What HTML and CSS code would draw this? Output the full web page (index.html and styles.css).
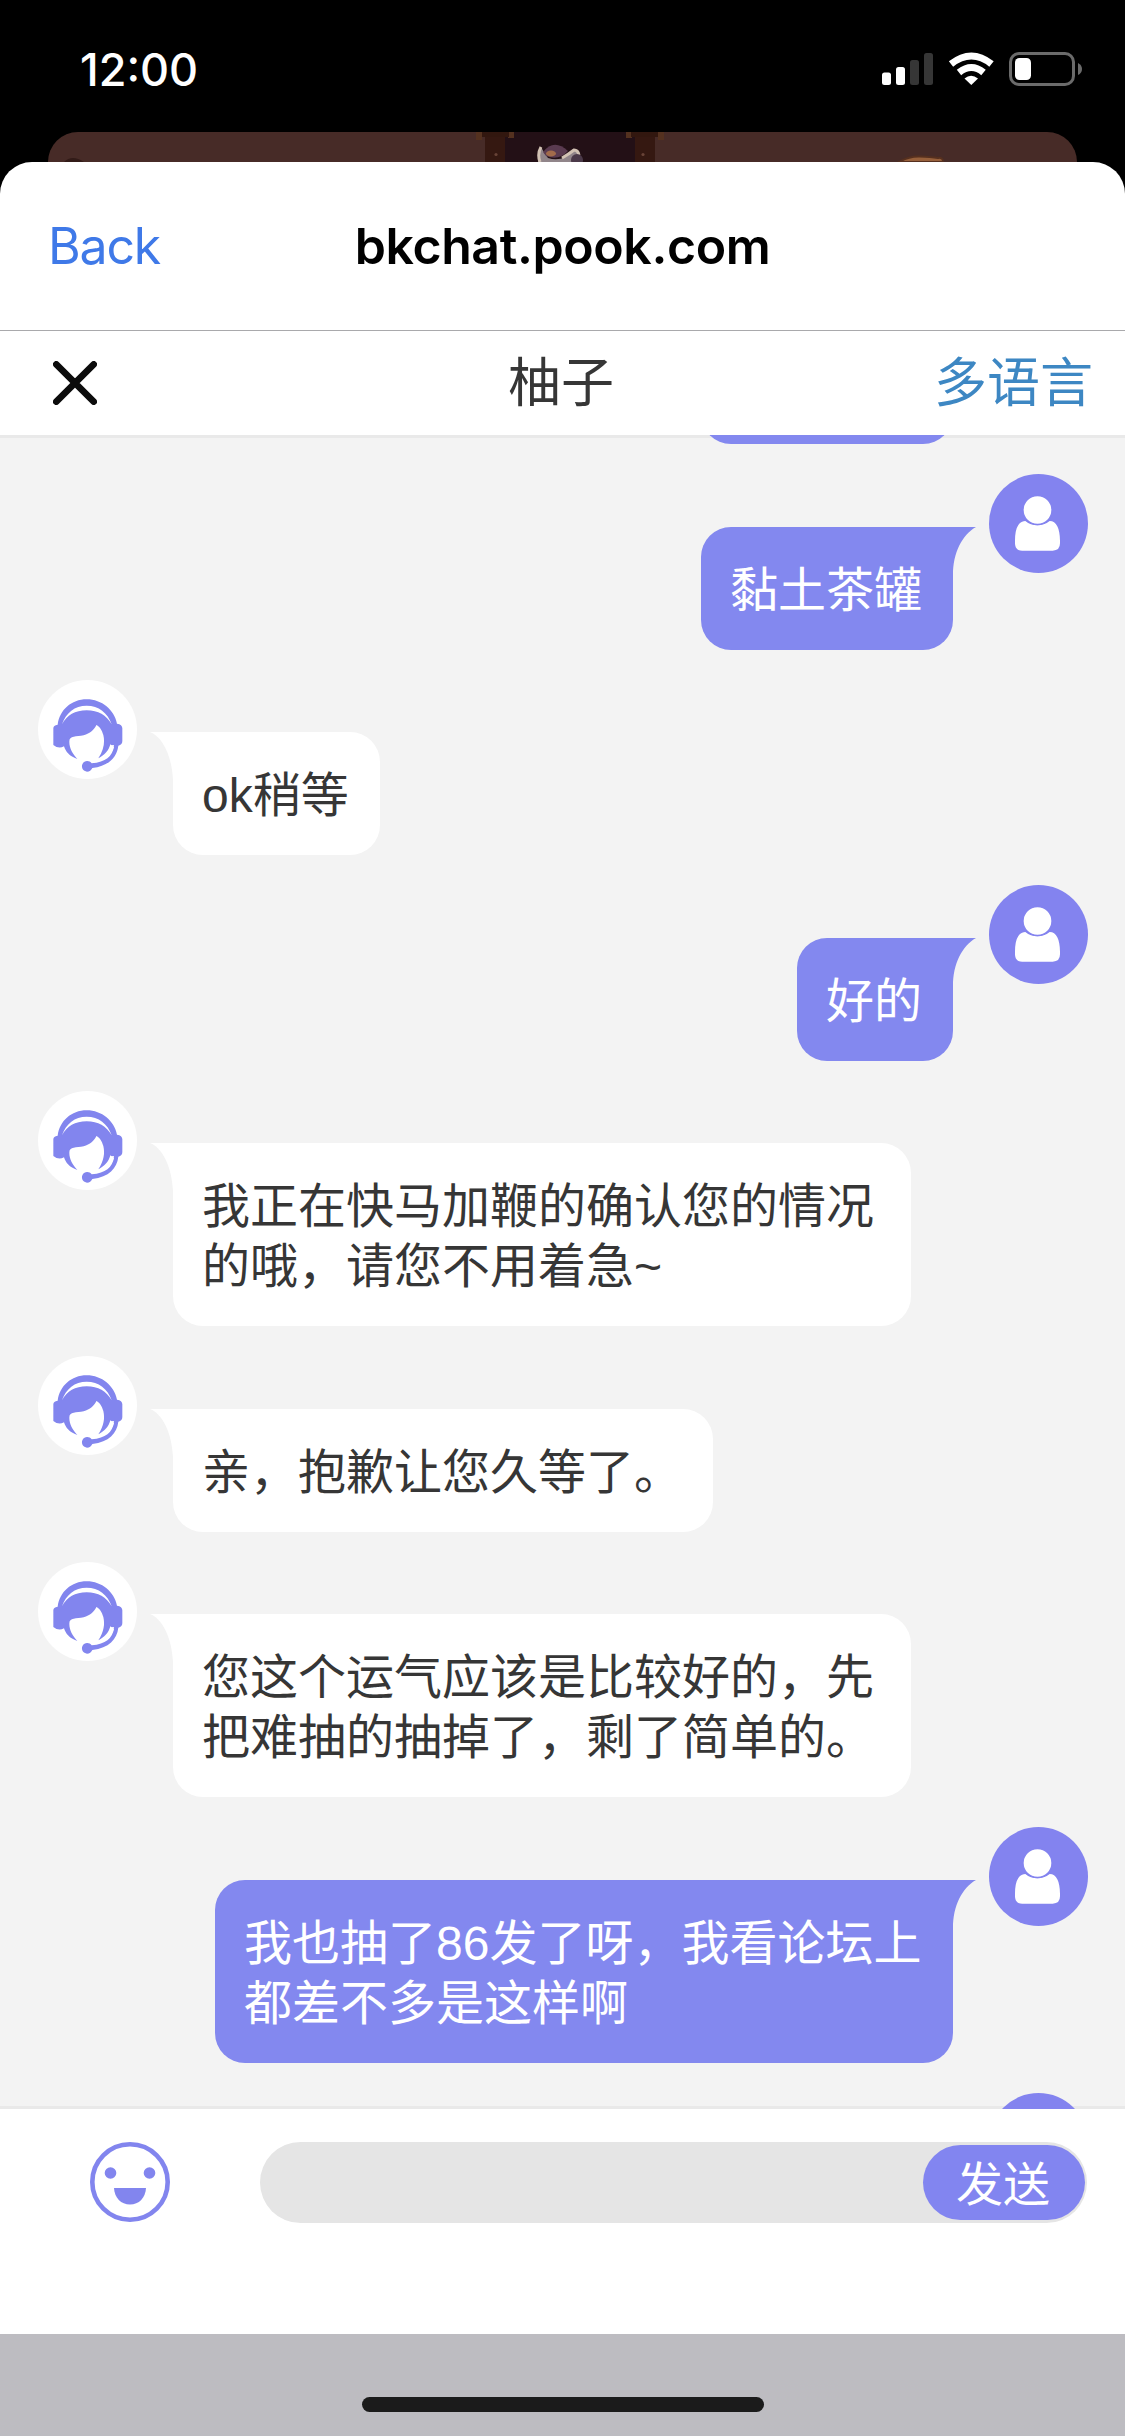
FILE: index.html
```html
<!DOCTYPE html>
<html lang="zh-CN">
<head>
<meta charset="utf-8">
<title>bkchat.pook.com</title>
<link rel="stylesheet" href="styles.css">
</head>
<body>
<svg class="defs" aria-hidden="true">
  <symbol id="user" viewBox="927 162 297 297">
    <circle cx="1075.500" cy="310.500" r="148.500" fill="#8383ef"/>
    <path d="M1036 303C1016 303 1005 325 1005 362V370Q1005 392 1027 392H1118Q1140 392 1140 370V362C1140 325 1129 303 1109 303Q1092 316 1072 316T1036 303Z" fill="#fff"/>
    <circle cx="1072.500" cy="270" r="43.500" fill="#fff" stroke="#8383ef" stroke-width="4"/>
  </symbol>
  <symbol id="agent" viewBox="113 59 297 297">
    <circle cx="261.500" cy="207.500" r="148.500" fill="#fff"/>
    <g fill="#8285ee">
      <path d="M172 193C178 149 213 117 259 117S342 149 350 190Q366 192 366 204V242Q366 253 354 256C350 290 326 317 276 323Q271 334 260 334A16 16 0 1 1 274 309C317 305 335 288 341 260L330 252C326 269 313 285 294 294C311 268 314 245 309 224C304 209 300 200 288 194C282 208 269 219 250 225C228 230 207 225 207 244C207 264 217 280 231 296C207 288 196 274 191 258Q175 267 159 254V204Q159 195 172 193Z"/>
    </g>
    <path d="M185 192C197 157 223 136 259 136S322 157 334 192C318 164 294 150 259 150S200 164 185 192Z" fill="#fff"/>
    <path d="M333 255Q330 278 318 287Q338 280 341 254Z" fill="#fff"/>
  </symbol>
  <symbol id="tail-right" viewBox="0 0 24 48"><path d="M0 0H24C10 8 1 26 1 48H0Z" fill="#8388ef"/></symbol>
  <symbol id="tail-left" viewBox="0 0 24 48"><path d="M24 0H0C13 5 22 25 23 48H24Z" fill="#fff"/></symbol>
</svg>

<div class="phone">
  <div class="status">
    <span class="clock">12:00</span>
    <svg class="indicators" width="202" height="34" viewBox="0 0 202 34">
      <g fill="#fff"><rect x="0" y="20.500" width="9" height="12.500" rx="2.500"/><rect x="14" y="15" width="9" height="18" rx="2.500"/></g>
      <g fill="#363636"><rect x="28" y="8" width="9" height="25" rx="2.500"/><rect x="42" y="1" width="9" height="32" rx="2.500"/></g>
      <g fill="none" stroke="#fff" stroke-width="7"><path d="M69 12Q89.500-4 109.500 12"/><path d="M77 20.500Q89.500 10.500 101.500 20.500"/></g>
      <path d="M82.500 26.500Q89 21 96 26.500L89.300 33Z" fill="#fff"/>
      <rect x="128.500" y="1.500" width="63" height="31" rx="8.500" fill="none" stroke="#6b6b6b" stroke-width="3"/>
      <path d="M196 11Q200 13 200 17T196 23Z" fill="#6b6b6b"/>
      <rect x="133" y="6" width="16" height="22" rx="4.500" fill="#fff"/>
    </svg>
  </div>

  <div class="behind">
    <svg width="1029" height="30" viewBox="48 132 1029 30">
      <rect x="48" y="132" width="1029" height="30" fill="#472b27"/>
      <rect x="505" y="132" width="130" height="30" fill="#231016"/>
      <path d="M485 132h20v30h-20zM635 132h20v30h-20z" fill="#351811"/>
      <path d="M476 132h38v6h-6v-3h-26v5h-6zM626 132h38v8h-6v-5h-26v3h-6z" fill="#54311f"/>
      <path d="M482 132h27v5h-27zM631 132h27v5h-27z" fill="#32170f"/>
      <circle cx="496" cy="154.500" r="1.600" fill="#684337"/><circle cx="643" cy="154.500" r="1.600" fill="#684337"/>
      <path d="M538 162Q538 152 541 147Q544 153 548 158Q563 163 575 149L580 155V162Z" fill="#91858a"/>
      <path d="M543 152Q554 138 568 151Q559 161 546 156Z" fill="#5a3b50"/>
      <ellipse cx="551" cy="153.500" rx="5" ry="3" fill="#a26b4b"/>
      <path d="M540 162Q537 154 541 147M562 158Q569 154 574 150Q578 150 579 155" fill="none" stroke="#d2c2b4" stroke-width="3"/>
      <circle cx="577" cy="160" r="6" fill="#4b3949"/>
      <path d="M64 162Q72 154 84 162Z" fill="#321b18"/>
      <path d="M899 162Q909 156 920 156.500T938 158Q943 157 943 162Z" fill="#97603b" stroke="#56301f" stroke-width="2"/>
    </svg>
  </div>

  <div class="sheet">
    <div class="browser-bar"><span class="back">Back</span><span class="host">bkchat.pook.com</span></div>
    <div class="chat-head">
      <svg class="close" width="44" height="44" viewBox="0 0 44 44"><path d="M3.300 3.300L40.700 40.700M40.700 3.300L3.300 40.700" stroke="#0c0c0c" stroke-width="6.600" stroke-linecap="round"/></svg>
      <span class="name">柚子</span>
      <span class="lang">多语言</span>
    </div>

    <div class="chat">
      <div class="row me first"><div class="bubble clipped"></div></div>
      <div class="row me"><div class="bubble">黏土茶罐<svg class="tail"><use href="#tail-right"/></svg></div><svg class="avatar"><use href="#user"/></svg></div>
      <div class="row"><svg class="avatar"><use href="#agent"/></svg><div class="bubble">ok稍等<svg class="tail"><use href="#tail-left"/></svg></div></div>
      <div class="row me"><div class="bubble">好的<svg class="tail"><use href="#tail-right"/></svg></div><svg class="avatar"><use href="#user"/></svg></div>
      <div class="row"><svg class="avatar"><use href="#agent"/></svg><div class="bubble">我正在快马加鞭的确认您的情况的哦，请您不用着急~<svg class="tail"><use href="#tail-left"/></svg></div></div>
      <div class="row"><svg class="avatar"><use href="#agent"/></svg><div class="bubble">亲，抱歉让您久等了。<svg class="tail"><use href="#tail-left"/></svg></div></div>
      <div class="row"><svg class="avatar"><use href="#agent"/></svg><div class="bubble">您这个运气应该是比较好的，先把难抽的抽掉了，剩了简单的。<svg class="tail"><use href="#tail-left"/></svg></div></div>
      <div class="row me"><div class="bubble">我也抽了86发了呀，我看论坛上都差不多是这样啊<svg class="tail"><use href="#tail-right"/></svg></div><svg class="avatar"><use href="#user"/></svg></div>
      <div class="row me"><svg class="avatar"><use href="#user"/></svg></div>
    </div>

    <div class="composer">
      <svg class="emoji" width="80" height="80" viewBox="0 0 80 80">
        <circle cx="40" cy="40" r="37.700" fill="none" stroke="#8285ee" stroke-width="4.600"/>
        <circle cx="20.500" cy="31" r="5.800" fill="#8285ee"/><circle cx="59.500" cy="31" r="5.800" fill="#8285ee"/>
        <path d="M24 46H56C55.500 56 49 62.500 40 62.500S24.500 56 24 46Z" fill="#8285ee"/>
      </svg>
      <div class="field"><span class="send">发送</span></div>
    </div>
    <div class="home"><div class="home-bar"></div></div>
  </div>
</div>
</body>
</html>
```
FILE: styles.css
```css
* { box-sizing: border-box; }
body {
  margin: 0;
  background: #000;
  font-family: "Liberation Sans", "Noto Sans CJK SC", sans-serif;
}
.defs { display: block; width: 0; height: 0; }
.phone {
  width: 1125px;
  height: 2436px;
  overflow: hidden;
  display: flex;
  flex-direction: column;
  background: #000;
}
.status {
  height: 132px;
  flex: none;
  display: flex;
  justify-content: space-between;
  align-items: flex-start;
  padding: 52px 41px 0 80px;
  color: #fff;
}
.clock {
  padding-top: 1px;
  font: 550 45px/34px Inter, sans-serif;
}
.behind {
  height: 30px;
  flex: none;
  margin: 0 48px;
  border-radius: 30px 30px 0 0;
  overflow: hidden;
}
.behind svg { display: block; }
.sheet {
  flex: 1;
  display: flex;
  flex-direction: column;
  min-height: 0;
  background: #fff;
  border-radius: 32px 32px 0 0;
  overflow: hidden;
}
.browser-bar {
  height: 169px;
  flex: none;
  display: grid;
  grid-template-columns: 1fr auto 1fr;
  align-items: center;
  padding: 0 48px;
  border-bottom: 1px solid #a9a9ac;
  font-family: Inter, sans-serif;
  font-size: 50px;
  line-height: 60px;
  color: #000;
}
.back { color: #3f79e8; letter-spacing: -1.2px; }
.host { font-weight: 600; letter-spacing: -0.4px; }
.chat-head {
  height: 104px;
  flex: none;
  display: grid;
  grid-template-columns: 1fr auto 1fr;
  align-items: center;
  padding: 0 32px 0 53px;
  font-size: 53px;
  line-height: 60px;
}
.close { display: block; }
.name, .lang { padding-top: 2px; }
.name { color: #363636; transform: translateX(-12px); }
.lang { color: #3d87c3; justify-self: end; }
.chat {
  height: 1674px;
  flex: none;
  overflow: hidden;
  display: flex;
  flex-direction: column;
  gap: 30px;
  padding: 0 37px 0 38px;
  background: #f3f3f3;
  box-shadow: inset 0 3px 0 #e9e9e9, inset 0 -3px 0 #e9e9e9;
}
.row {
  display: flex;
  flex: none;
  align-items: flex-start;
  gap: 36px;
}
.row.me { justify-content: flex-end; }
.row.first { margin-top: -166.2px; padding-right: 135px; }
.avatar { width: 99px; height: 99px; flex: none; display: block; }
.bubble {
  position: relative;
  max-width: 738px;
  margin-top: 52.5px;
  padding: 34px 31px 29px 29px;
  border-radius: 0 30px 30px 30px;
  background: #fff;
  color: #363636;
  font-size: 48px;
  line-height: 60px;
}
.me .bubble {
  border-radius: 30px 0 30px 30px;
  background: #8388ef;
  color: #fff;
}
.bubble.clipped { width: 252px; height: 123px; }
.tail {
  position: absolute;
  top: 0;
  left: -23px;
  width: 24px;
  height: 48px;
}
.me .tail { left: auto; right: -23px; }
.composer {
  height: 225px;
  flex: none;
  display: flex;
  align-items: flex-start;
  justify-content: space-between;
  padding: 33px 38px 0 90px;
}
.field {
  width: 827px;
  height: 81px;
  display: flex;
  justify-content: flex-end;
  padding: 3px 2px;
  border-radius: 41px;
  background: #e5e5e5;
}
.send {
  width: 162px;
  height: 75px;
  padding-right: 2px;
  border-radius: 38px;
  background: #8285f0;
  color: #fff;
  font-size: 47px;
  line-height: 80px;
  text-align: center;
}
.home {
  flex: 1;
  display: flex;
  justify-content: center;
  padding-top: 63px;
  background: #bdbcc1;
}
.home-bar {
  width: 402px;
  height: 15px;
  border-radius: 8px;
  background: #1b1b1b;
}
```
